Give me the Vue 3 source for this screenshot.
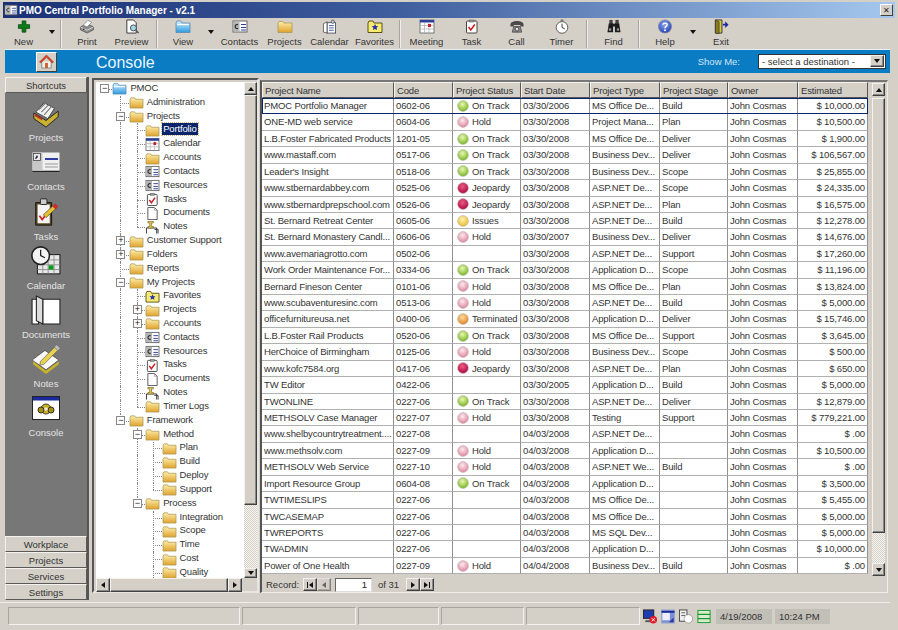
<script setup>
// tree data, flattened below so each row knows its guide lines
const treeData = {
  label: 'PMOC', icon: 'folderblue', open: true, kids: [
    { label: 'Administration' },
    { label: 'Projects', open: true, kids: [
      { label: 'Portfolio', selected: true },
      { label: 'Calendar', icon: 'calendar' },
      { label: 'Accounts' },
      { label: 'Contacts', icon: 'card' },
      { label: 'Resources', icon: 'card' },
      { label: 'Tasks', icon: 'task' },
      { label: 'Documents', icon: 'doc' },
      { label: 'Notes', icon: 'pin' },
    ] },
    { label: 'Customer Support', closed: true },
    { label: 'Folders', closed: true },
    { label: 'Reports' },
    { label: 'My Projects', open: true, kids: [
      { label: 'Favorites', icon: 'fav' },
      { label: 'Projects', closed: true },
      { label: 'Accounts', closed: true },
      { label: 'Contacts', icon: 'card' },
      { label: 'Resources', icon: 'card' },
      { label: 'Tasks', icon: 'task' },
      { label: 'Documents', icon: 'doc' },
      { label: 'Notes', icon: 'pin' },
      { label: 'Timer Logs' },
    ] },
    { label: 'Framework', open: true, kids: [
      { label: 'Method', open: true, kids: [
        { label: 'Plan' }, { label: 'Build' }, { label: 'Deploy' }, { label: 'Support' },
      ] },
      { label: 'Process', open: true, kids: [
        { label: 'Integration' }, { label: 'Scope' }, { label: 'Time' }, { label: 'Cost' },
        { label: 'Quality', more: true },
      ] },
    ] },
  ],
}

const treeRows = []
const walk = (node, guides, last, isRoot) => {
  treeRows.push({ ...node, guides, last, isRoot })
  const kids = node.kids || []
  kids.forEach((k, i) => {
    walk(k, [...guides, !last], i === kids.length - 1 && !k.more, false)
  })
}
walk(treeData, [], true, true)

const tools = [
  { label: 'New', icon: 'tNew', w: 45 }, { arrow: true }, { sep: true },
  { label: 'Print', icon: 'tPrint', w: 44 }, { label: 'Preview', icon: 'tPreview', w: 45 }, { sep: true },
  { label: 'View', icon: 'folderblue', w: 44 }, { arrow: true },
  { label: 'Contacts', icon: 'card', w: 45 }, { label: 'Projects', icon: 'folder', w: 45 },
  { label: 'Calendar', icon: 'tCal', w: 45 }, { label: 'Favorites', icon: 'fav', w: 45 }, { sep: true },
  { label: 'Meeting', icon: 'calendar', w: 45 }, { label: 'Task', icon: 'task', w: 45 },
  { label: 'Call', icon: 'tCall', w: 45 }, { label: 'Timer', icon: 'tTimer', w: 45 }, { sep: true },
  { label: 'Find', icon: 'tFind', w: 45 }, { sep: true },
  { label: 'Help', icon: 'tHelp', w: 44 }, { arrow: true },
  { label: 'Exit', icon: 'tExit', w: 44 },
]

const shortcuts = [
  { label: 'Projects', icon: 'sProjects' },
  { label: 'Contacts', icon: 'sContacts' },
  { label: 'Tasks', icon: 'sTasks' },
  { label: 'Calendar', icon: 'sCalendar' },
  { label: 'Documents', icon: 'sDocs' },
  { label: 'Notes', icon: 'sNotes' },
  { label: 'Console', icon: 'sConsole' },
]

const columns = ['Project Name', 'Code', 'Project Status', 'Start Date', 'Project Type', 'Project Stage', 'Owner', 'Estimated']

const raw = `PMOC Portfolio Manager|0602-06|On Track|03/30/2006|MS Office De...|Build|$ 10,000.00
ONE-MD web service|0604-06|Hold|03/30/2008|Project Mana...|Plan|$ 10,500.00
L.B.Foster Fabricated Products|1201-05|On Track|03/30/2008|MS Office De...|Deliver|$ 1,900.00
www.mastaff.com|0517-06|On Track|03/30/2008|Business Dev...|Deliver|$ 106,567.00
Leader's Insight|0518-06|On Track|03/30/2008|Business Dev...|Scope|$ 25,855.00
www.stbernardabbey.com|0525-06|Jeopardy|03/30/2008|ASP.NET De...|Scope|$ 24,335.00
www.stbernardprepschool.com|0526-06|Jeopardy|03/30/2008|ASP.NET De...|Plan|$ 16,575.00
St. Bernard Retreat Center|0605-06|Issues|03/30/2008|ASP.NET De...|Build|$ 12,278.00
St. Bernard Monastery Candl...|0606-06|Hold|03/30/2007|Business Dev...|Deliver|$ 14,676.00
www.avemariagrotto.com|0502-06||03/30/2008|ASP.NET De...|Support|$ 17,260.00
Work Order Maintenance For...|0334-06|On Track|03/30/2008|Application D...|Scope|$ 11,196.00
Bernard Fineson Center|0101-06|Hold|03/30/2008|MS Office De...|Plan|$ 13,824.00
www.scubaventuresinc.com|0513-06|Hold|03/30/2008|ASP.NET De...|Build|$ 5,000.00
officefurnitureusa.net|0400-06|Terminated|03/30/2008|Application D...|Deliver|$ 15,746.00
L.B.Foster Rail Products|0520-06|On Track|03/30/2008|MS Office De...|Support|$ 3,645.00
HerChoice of Birmingham|0125-06|Hold|03/30/2008|Business Dev...|Scope|$ 500.00
www.kofc7584.org|0417-06|Jeopardy|03/30/2008|ASP.NET De...|Plan|$ 650.00
TW Editor|0422-06||03/30/2005|Application D...|Build|$ 5,000.00
TWONLINE|0227-06|On Track|03/30/2008|ASP.NET De...|Deliver|$ 12,879.00
METHSOLV Case Manager|0227-07|Hold|03/30/2008|Testing|Support|$ 779,221.00
www.shelbycountrytreatment....|0227-08||04/03/2008|ASP.NET De...||$ .00
www.methsolv.com|0227-09|Hold|04/03/2008|Application D...||$ 10,500.00
METHSOLV Web Service|0227-10|Hold|04/03/2008|ASP.NET We...|Build|$ .00
Import Resource Group|0604-08|On Track|04/03/2008|Application D...||$ 3,500.00
TWTIMESLIPS|0227-06||04/03/2008|MS Office De...||$ 5,455.00
TWCASEMAP|0227-06||04/03/2008|MS Office De...||$ 5,000.00
TWREPORTS|0227-06||04/03/2008|MS SQL Dev...||$ 5,000.00
TWADMIN|0227-06||04/03/2008|Application D...||$ 10,000.00
Power of One Health|0227-09|Hold|04/04/2008|Business Dev...|Build|$ .00`

const projects = raw.split('\n').map((l) => {
  const [name, code, status, start, type, stage, est] = l.split('|')
  return { name, code, status, start, type, stage, owner: 'John Cosmas', est }
})

const ballFor = { 'On Track': 'gGreen', Hold: 'gPink', Jeopardy: 'gRed', Issues: 'gYellow', Terminated: 'gOrange' }
</script>

<template>
  <div class="app">
    <svg class="defs" aria-hidden="true">
      <defs>
        <linearGradient id="gFolder" x1="0" y1="0" x2="0" y2="1"><stop offset="0" stop-color="#fdeeaa" /><stop offset="1" stop-color="#e0a22c" /></linearGradient>
        <linearGradient id="gBlue" x1="0" y1="0" x2="0" y2="1"><stop offset="0" stop-color="#d4f0ff" /><stop offset="1" stop-color="#2e9ae0" /></linearGradient>
        <radialGradient id="gGreen" cx=".45" cy=".35" r=".7"><stop offset="0" stop-color="#eaf7b0" /><stop offset="1" stop-color="#6cb014" /></radialGradient>
        <radialGradient id="gPink" cx=".45" cy=".35" r=".7"><stop offset="0" stop-color="#fdeaee" /><stop offset="1" stop-color="#dc7c96" /></radialGradient>
        <radialGradient id="gRed" cx=".45" cy=".35" r=".7"><stop offset="0" stop-color="#ee5a80" /><stop offset="1" stop-color="#a80040" /></radialGradient>
        <radialGradient id="gYellow" cx=".45" cy=".35" r=".7"><stop offset="0" stop-color="#fff4b0" /><stop offset="1" stop-color="#e8b422" /></radialGradient>
        <radialGradient id="gOrange" cx=".45" cy=".35" r=".7"><stop offset="0" stop-color="#ffdca0" /><stop offset="1" stop-color="#e07c18" /></radialGradient>
        <radialGradient id="gHelp" cx=".45" cy=".35" r=".7"><stop offset="0" stop-color="#8aa8f0" /><stop offset="1" stop-color="#1c3cb0" /></radialGradient>
      </defs>

      <symbol id="folder" viewBox="0 0 16 14"><path d="M1 3.5 2 2h4l1 1.5h8V13H1z" fill="url(#gFolder)" stroke="#a89858" stroke-width=".8" /></symbol>
      <symbol id="folderblue" viewBox="0 0 16 14"><path d="M1 3.5 2 1.5h4l1 2h8V13H1z" fill="url(#gBlue)" stroke="#5a8ab0" stroke-width=".8" /><path d="M2 5h12" stroke="#fff" stroke-width="1.2" /></symbol>
      <symbol id="calendar" viewBox="0 0 16 14"><rect x="1" y=".5" width="14" height="13" fill="#fff" stroke="#777" /><rect x="1" y=".5" width="14" height="2.5" fill="#2a3f9a" /><path d="M1 6h14M1 9.5h14M5.5 3v10M10 3v10" stroke="#aaa" stroke-width=".7" /><rect x="9" y="4.5" width="3" height="3" fill="#c02030" /></symbol>
      <symbol id="card" viewBox="0 0 16 14"><rect x="1" y="1.5" width="14" height="11" fill="#fff" stroke="#666" /><rect x="1.5" y="2" width="6" height="10" fill="#b4b4b4" /><path d="M6 5.2A2 2 0 1 0 6 8.8" fill="none" stroke="#222" stroke-width="1.1" /><path d="M9 5h5M9 8h5M9 10.5h5" stroke="#2a3f9a" /></symbol>
      <symbol id="task" viewBox="0 0 16 14"><rect x="2.5" y="1.5" width="10.5" height="12" rx="1" fill="#fff" stroke="#444" /><rect x="5.5" y=".5" width="4.5" height="2" fill="#999" stroke="#555" stroke-width=".5" /><path d="m4.6 7.5 2.2 3 4-5.5" fill="none" stroke="#d01820" stroke-width="1.5" /></symbol>
      <symbol id="doc" viewBox="0 0 16 14"><path d="M3 .5h7l3 3v10H3z" fill="#fff" stroke="#555" /><path d="M10 .5v3h3" fill="none" stroke="#888" stroke-width=".7" /></symbol>
      <symbol id="pin" viewBox="0 0 16 14"><path d="M1.5 13.5v-6h11v6" fill="#fff" stroke="#333" /><path d="M3 .5h6V2H7v4h2v1.500H3V6h2V2H3z" fill="#f0d050" stroke="#706020" stroke-width=".7" /><path d="M10 9h4v4.500" fill="none" stroke="#333" /></symbol>
      <symbol id="fav" viewBox="0 0 16 14"><path d="M1 3.500 2 1.500h4l1 2h8V13H1z" fill="#f6ec70" stroke="#5a5018" /><path d="m8 4.600 1 2 2.200.2-1.600 1.500.4 2.200-2-1-2 1 .4-2.200-1.600-1.500L7 6.600z" fill="#2a2fb0" /></symbol>

      <symbol id="tNew" viewBox="0 0 16 16"><path d="M6 2h4v4h4v4h-4v4H6v-4H2V6h4z" fill="#0c7a18" stroke="#08480e" stroke-width=".8" /></symbol>
      <symbol id="tPrint" viewBox="0 0 16 16"><path d="M1 8.500 8 5l7 3.500v3l-7 3.500-7-3.500z" fill="#8c8c8c" stroke="#444" stroke-width=".7" /><path d="M4 6.500 9 1.500l4 2-5 5z" fill="#fff" stroke="#666" stroke-width=".6" /><path d="m1 8.500 7 3.500 7-3.500" fill="none" stroke="#d8d8d8" /><circle cx="4.500" cy="11" r=".8" fill="#222" /></symbol>
      <symbol id="tPreview" viewBox="0 0 16 16"><path d="M2.500 1h7l3 3v11h-10z" fill="#fff" stroke="#333" /><circle cx="9.500" cy="9.500" r="3.200" fill="#a8d8e8" stroke="#445" /><path d="m12 12 3 3" stroke="#555" stroke-width="1.600" /></symbol>
      <symbol id="tCal" viewBox="0 0 16 16"><path d="M1 5 5 3v12l-4-1z" fill="#fff" stroke="#444" stroke-width=".8" /><rect x="5" y="4" width="9" height="11" fill="#fff" stroke="#334" stroke-width=".8" /><path d="M7 7h5M7 9.500h5M7 12h5" stroke="#2a3f9a" stroke-width=".9" /><circle cx="11" cy="2.800" r="1.700" fill="#ccd" stroke="#334" stroke-width=".7" /></symbol>
      <symbol id="tCall" viewBox="0 0 16 16"><path d="M1 6c0-5 14-5 14 0v2h-3.500V6.500h-7V8H1z" fill="#4a4a4a" /><path d="M3 14 4.500 8h7L13 14z" fill="#8a8a8a" stroke="#333" stroke-width=".7" /><circle cx="8" cy="10.700" r="2" fill="#e0e0e0" stroke="#222" stroke-width=".7" /></symbol>
      <symbol id="tTimer" viewBox="0 0 16 16"><circle cx="8" cy="9" r="6.200" fill="#fff" stroke="#555" /><rect x="6.500" y=".5" width="3" height="2" fill="#777" /><path d="M8 9V5M8 9l3 1.500" stroke="#333" fill="none" /></symbol>
      <symbol id="tFind" viewBox="0 0 16 16"><rect x="3" y="1" width="3.500" height="4" fill="#444" /><rect x="9.500" y="1" width="3.500" height="4" fill="#444" /><rect x="6" y="5" width="4" height="3" fill="#222" /><path d="M2.500 4.500h4.500V14H1z" fill="#1c1c1c" /><path d="M9 4.500h4.500L15 14H9z" fill="#1c1c1c" /><rect x="2.500" y="10" width="2.500" height="2.500" fill="#999" /><rect x="11" y="10" width="2.500" height="2.500" fill="#999" /></symbol>
      <symbol id="tHelp" viewBox="0 0 16 16"><circle cx="8" cy="8" r="7" fill="url(#gHelp)" stroke="#889" stroke-width=".8" /><path d="M5.800 6.200C6 3.800 10.500 3.900 10.300 6.300 10.200 8 8 7.800 8 9.800" fill="none" stroke="#fff" stroke-width="1.500" /><circle cx="8" cy="12" r="1" fill="#fff" /></symbol>
      <symbol id="tExit" viewBox="0 0 16 16"><path d="M2 1h7v14H2z" fill="#d8c840" stroke="#333" /><path d="M2 1l4 2v13l-4-1z" fill="#8a7a18" stroke="#333" stroke-width=".7" /><path d="M10 5h2.500V2.500L16 6l-3.500 3.500V7H10z" fill="#1c2ca0" /></symbol>

      <symbol id="sProjects" viewBox="0 0 32 32"><path d="M3 16 16 24l13-10v6L16 31 3 22z" fill="#c8b030" stroke="#222" /><path d="M5 15 14 5l11 6-7 11z" fill="#f2f2f2" stroke="#444" /><path d="m8 13 9-9M11 15l9-9M14 18l8-9" stroke="#777" stroke-width="1.200" /><path d="M4 18l8 5" stroke="#c03020" stroke-width="2" /></symbol>
      <symbol id="sContacts" viewBox="0 0 28 20"><rect x=".5" y=".5" width="27" height="18" fill="#f0f0f0" /><rect x=".5" y=".5" width="10" height="18" fill="#c8c8c8" /><rect x="1.500" y="1.500" width="7" height="7" fill="#e8e8e8" stroke="#333" stroke-width=".7" /><path d="M3 6.500 5 3l1 2-2 2" fill="#222" /><path d="M13 7h13" stroke="#1a2a9a" stroke-width="1.800" /><path d="M13 12h13M13 15h13" stroke="#999" /><path d="M.5 19.500h27" stroke="#222" /></symbol>
      <symbol id="sTasks" viewBox="0 0 28 32"><path d="M3 6h17v24H3z" fill="#5a4a20" stroke="#111" /><rect x="5" y="8" width="13" height="20" fill="#f4f4f4" /><rect x="8" y="2" width="7" height="6" rx="1" fill="#ccc" stroke="#222" /><path d="m7 20 3 4 7-9" fill="none" stroke="#d02020" stroke-width="1.800" /><path d="m11 19 12-11 3 3-12 11z" fill="#e8c030" stroke="#333" stroke-width=".6" /><path d="m21 10 3-3 3 3-3 3z" fill="#d02828" /></symbol>
      <symbol id="sCalendar" viewBox="0 0 28 28"><rect x="6" y="8" width="21" height="18" fill="#e8e8e8" stroke="#222" /><path d="M6 13h21M6 17.500h21M6 22h21M11 8v18M16 8v18M21.500 8v18" stroke="#888" stroke-width=".8" /><rect x="16.500" y="18" width="4.500" height="4" fill="#0a9a20" /><circle cx="9" cy="9" r="8.200" fill="#f4f4f4" stroke="#222" stroke-width="1.500" /><path d="M9 3.500V9l4 2" fill="none" stroke="#222" stroke-width="1.200" /></symbol>
      <symbol id="sDocs" viewBox="0 0 28 28"><path d="M11 4h16v23H11z" fill="#fff" stroke="#222" /><path d="M1 4h6v23H1z" fill="#fff" stroke="#222" /><path d="M5 1 11 4v23L5 24z" fill="#ddd" stroke="#222" /></symbol>
      <symbol id="sNotes" viewBox="0 0 28 28"><path d="M1 15 13 6l13 9-12 9z" fill="#fafafa" stroke="#333" stroke-width=".6" /><path d="M2 16l12 9 12-9v3L14 28 2 19z" fill="#c8b428" /><path d="M9 16 22 3l3 3-13 13-4 1z" fill="#e8d050" stroke="#555" stroke-width=".6" /><path d="m22 3 2-2 3 3-2 2z" fill="#bbb" /></symbol>
      <symbol id="sConsole" viewBox="0 0 28 24"><rect x=".5" y=".5" width="27" height="23" fill="#fff" stroke="#222" /><rect x="1" y="1" width="26" height="3.500" fill="#1a2a9a" /><circle cx="14" cy="13" r="5" fill="#c8b020" stroke="#443" /><circle cx="9" cy="14" r="3" fill="#a89010" stroke="#332" /><circle cx="19" cy="14" r="3" fill="#a89010" stroke="#332" /><circle cx="14" cy="13" r="1.800" fill="#e8e8f8" /></symbol>
      <symbol id="home" viewBox="0 0 16 16"><path d="M3 8v7h10V8" fill="#f5f0e8" stroke="#888" /><path d="M.5 8.500 8 1l7.500 7.500-1.500 1L8 3.500 2 9.500z" fill="#d84828" stroke="#902010" stroke-width=".5" /><rect x="6.500" y="9.500" width="3" height="5.500" fill="#c86030" /></symbol>

      <symbol id="stNet" viewBox="0 0 16 16"><rect x="1" y="1" width="11" height="9" fill="#1c3cb0" stroke="#222" /><path d="M3 12h8v2H3z" fill="#555" /><circle cx="11.500" cy="11.500" r="4" fill="#e01828" /><path d="m9.800 9.800 3.400 3.400m0-3.400-3.400 3.400" stroke="#fff" /></symbol>
      <symbol id="stWin" viewBox="0 0 16 16"><rect x="1" y="1" width="14" height="14" fill="#7a90d8" stroke="#a0a8c8" /><rect x="2" y="4" width="8" height="8" fill="#eef" /><path d="M1 3h14" stroke="#1a2a9a" stroke-width="2" /><path d="m9 14 5-5v5z" fill="#2a3a9a" /></symbol>
      <symbol id="stDoc" viewBox="0 0 16 16"><rect x="1" y="1" width="8" height="12" fill="#f0f0f0" stroke="#444" /><path d="M3 4h4M3 7h4" stroke="#555" /><circle cx="10.500" cy="10.500" r="4.500" fill="#fff" stroke="#666" stroke-width=".5" /></symbol>
      <symbol id="stList" viewBox="0 0 16 16"><rect x="1.500" y="1.500" width="13" height="13" fill="#dcebd0" stroke="#129a2a" /><path d="M1.500 5.800h13M1.500 10.200h13" stroke="#129a2a" stroke-width="1.400" /></symbol>
    </svg>

    <header class="titlebar">
      <svg class="app-icon" viewBox="0 0 16 14"><use href="#card" /></svg>
      <span class="title-text">PMO Central Portfolio Manager - v2.1</span>
      <button class="close-btn">✕</button>
    </header>

    <nav class="toolbar">
      <template v-for="(t, i) in tools" :key="i">
        <span v-if="t.sep" class="tool-sep"></span>
        <span v-else-if="t.arrow" class="tool-arrow"><i class="arrow-down"></i></span>
        <div v-else class="tool" :style="{ width: t.w + 'px' }">
          <svg class="tool-icon"><use :href="'#' + t.icon" /></svg>
          <span>{{ t.label }}</span>
        </div>
      </template>
    </nav>

    <section class="band">
      <button class="home-btn"><svg><use href="#home" /></svg></button>
      <h1 class="band-title">Console</h1>
      <span class="show-me">Show Me:</span>
      <div class="dest-select">
        <span>- select a destination -</span>
        <span class="sb-btn dest-drop"><i class="arrow-down"></i></span>
      </div>
    </section>

    <main class="main">
      <aside class="sidebar">
        <button class="side-btn first">Shortcuts</button>
        <div class="shortcuts">
          <div v-for="s in shortcuts" :key="s.label" class="shortcut">
            <div class="shortcut-icon"><svg :class="s.icon"><use :href="'#' + s.icon" /></svg></div>
            <span>{{ s.label }}</span>
          </div>
        </div>
        <button class="side-btn">Workplace</button>
        <button class="side-btn">Projects</button>
        <button class="side-btn">Services</button>
        <button class="side-btn">Settings</button>
      </aside>

      <section class="tree-pane">
        <div class="tree-top">
          <div class="tree">
            <div v-for="(r, i) in treeRows" :key="i" class="tree-row">
              <span v-for="(g, gi) in r.guides" :key="gi" class="guide" :class="{ line: g }"></span>
              <span class="guide elbow" :class="{ root: r.isRoot, last: r.last }">
                <span v-if="r.open || r.closed" class="expander">{{ r.open ? '−' : '+' }}</span>
              </span>
              <svg class="tree-icon"><use :href="'#' + (r.icon || 'folder')" /></svg>
              <span class="tree-label" :class="{ selected: r.selected }">{{ r.label }}</span>
            </div>
          </div>
          <div class="vscroll tree-vscroll">
            <span class="sb-btn"><i class="arrow-up"></i></span>
            <span class="sb-thumb"></span>
            <span class="sb-track"></span>
            <span class="sb-btn short"><i class="arrow-down"></i></span>
          </div>
        </div>
        <div class="hscroll">
          <span class="sb-btn"><i class="arrow-left"></i></span>
          <span class="sb-thumb"></span>
          <span class="sb-btn"><i class="arrow-right"></i></span>
          <span class="sb-corner"></span>
        </div>
      </section>

      <section class="grid-pane">
        <div class="grid-top">
          <div class="grid">
            <div class="grid-head">
              <div v-for="c in columns" :key="c" class="head-cell">{{ c }}</div>
            </div>
            <div v-for="(p, i) in projects" :key="i" class="grid-row" :class="{ current: i === 0 }">
              <div class="cell">{{ p.name }}</div>
              <div class="cell">{{ p.code }}</div>
              <div class="cell status">
                <template v-if="p.status">
                  <svg class="ball" viewBox="0 0 12 12"><circle cx="6" cy="6" r="5.400" :fill="`url(#${ballFor[p.status]})`" stroke="#b8b8b8" stroke-width=".6" /></svg>
                  <span>{{ p.status }}</span>
                </template>
              </div>
              <div class="cell">{{ p.start }}</div>
              <div class="cell">{{ p.type }}</div>
              <div class="cell">{{ p.stage }}</div>
              <div class="cell">{{ p.owner }}</div>
              <div class="cell num">{{ p.est }}</div>
            </div>
          </div>
          <div class="vscroll grid-vscroll">
            <span class="sb-btn"><i class="arrow-up"></i></span>
            <span class="sb-thumb"></span>
            <span class="sb-track"></span>
            <span class="sb-btn"><i class="arrow-down"></i></span>
          </div>
        </div>
        <div class="record-bar">
          <span class="rec-label">Record:</span>
          <span class="sb-btn nav"><i class="bar"></i><i class="arrow-left"></i></span>
          <span class="sb-btn nav dim"><i class="arrow-left"></i></span>
          <input class="rec-input" value="1" readonly />
          <span class="rec-of">of 31</span>
          <span class="sb-btn nav"><i class="arrow-right"></i></span>
          <span class="sb-btn nav"><i class="arrow-right"></i><i class="bar"></i></span>
        </div>
      </section>
    </main>

    <div class="rule"></div>

    <footer class="statusbar">
      <span class="st-cell c1"></span>
      <span class="st-cell c2"></span>
      <span class="st-cell c3"></span>
      <span class="st-cell c4"></span>
      <span class="st-cell c5"></span>
      <svg class="st-icon"><use href="#stNet" /></svg>
      <svg class="st-icon"><use href="#stWin" /></svg>
      <svg class="st-icon"><use href="#stDoc" /></svg>
      <svg class="st-icon"><use href="#stList" /></svg>
      <span class="st-info date">4/19/2008</span>
      <span class="st-info time">10:24 PM</span>
    </footer>
  </div>
</template>

<style>
html, body { margin: 0; background: #d4d0c8; }
</style>

<style scoped>
.app {
  width: 898px;
  height: 630px;
  box-sizing: border-box;
  padding-top: 2px;
  overflow: hidden;
  background: #d4d0c8;
  font-family: "Liberation Sans", Arial, sans-serif;
  font-size: 9.5px;
  color: #222;
  display: flex;
  flex-direction: column;
}
.defs { width: 0; height: 0; display: block; }
button { font-family: inherit; padding: 0; }

/* title */
.titlebar {
  height: 16px;
  margin: 0 3px;
  flex: none;
  display: flex;
  align-items: center;
  background: linear-gradient(90deg, #1a3076, #3f5f9f 45%, #a4c8ee);
  color: #fff;
  font-weight: 700;
  font-size: 10px;
}
.app-icon { width: 14px; height: 12px; margin: 0 1px 0 1px; }
.close-btn {
  margin-left: auto;
  margin-right: 2px;
  width: 13px;
  height: 12px;
  font-size: 8px;
  line-height: 9px;
  color: #222;
  background: #d4d0c8;
  border: 1px solid;
  border-color: #fff #404040 #404040 #fff;
}

/* toolbar */
.toolbar {
  height: 31px;
  flex: none;
  padding-left: 1px;
  display: flex;
  align-items: stretch;
}
.tool {
  flex: none;
  display: flex;
  flex-direction: column;
  align-items: center;
  justify-content: flex-end;
  padding-bottom: 1px;
  line-height: 12px;
  color: #333;
  white-space: nowrap;
}
.tool-icon { width: 16px; height: 15px; margin-bottom: 2px; }
.tool-arrow {
  width: 12px;
  flex: none;
  display: flex;
  align-items: center;
  justify-content: center;
  padding-bottom: 4px;
}
.tool-sep {
  width: 0;
  margin: 2px 3px 1px 2px;
  flex: none;
  border-left: 1px solid #a8a59c;
  border-right: 1px solid #f0eee8;
}
.arrow-down, .arrow-up, .arrow-left, .arrow-right { display: block; width: 0; height: 0; border: 3px solid transparent; }
.arrow-down { border-top: 4px solid #111; border-bottom: 0; }
.arrow-up { border-bottom: 4px solid #111; border-top: 0; }
.arrow-left { border-right: 4px solid #111; border-left: 0; }
.arrow-right { border-left: 4px solid #111; border-right: 0; }

/* blue band */
.band {
  height: 24px;
  flex: none;
  margin: 0 8px 0 5px;
  display: flex;
  align-items: center;
  background: #0a7cc4;
  border-top: 1px solid #e8f0f4;
  box-sizing: border-box;
  color: #fff;
}
.home-btn {
  width: 21px;
  height: 20px;
  margin-left: 31px;
  background: #d4d0c8;
  border: 1px solid;
  border-color: #fff #404040 #404040 #fff;
  display: flex;
  align-items: center;
  justify-content: center;
}
.home-btn svg { width: 15px; height: 15px; }
.band-title { margin: 2px 0 0 39px; font-size: 16px; font-weight: 400; color: #e8f6ff; }
.show-me { margin-left: auto; color: #cfe6f4; }
.dest-select {
  width: 128px;
  height: 15px;
  margin: 0 4px 1px 18px;
  box-sizing: border-box;
  display: flex;
  align-items: center;
  justify-content: space-between;
  padding-left: 3px;
  background: #fff;
  border: 1px solid #333;
  color: #333;
}
.dest-drop { width: 14px; height: 12px; margin-right: 1px; }

/* main */
.main {
  height: 527px;
  flex: none;
  padding: 2px 0 0 5px;
  box-sizing: border-box;
  display: flex;
  align-items: flex-start;
}

/* sidebar */
.sidebar {
  width: 84px;
  height: 523px;
  margin-top: 2px;
  flex: none;
  box-sizing: border-box;
  border-right: 2px solid #555;
  display: flex;
  flex-direction: column;
}
.side-btn {
  height: 16px;
  flex: none;
  box-sizing: border-box;
  background: #d4d0c8;
  border: 1px solid;
  border-color: #f4f2ee #5a5a5a #5a5a5a #f4f2ee;
  font-size: 9.5px;
  color: #333;
}
.shortcuts {
  flex: 1;
  min-height: 0;
  background: #777;
  padding-top: 2px;
  display: flex;
  flex-direction: column;
}
.shortcut {
  height: 49.2px;
  flex: none;
  display: flex;
  flex-direction: column;
  align-items: center;
  justify-content: flex-end;
  color: #e4e4e4;
  line-height: 13px;
}
.shortcut-icon { height: 32px; display: flex; align-items: center; justify-content: center; margin-bottom: 2px; }
.shortcut-icon svg { width: 30px; height: 30px; }
.shortcut-icon .sContacts { width: 28px; height: 20px; }
.shortcut-icon .sConsole { width: 28px; height: 24px; }

/* tree */
.tree-pane {
  width: 167px;
  height: 515px;
  flex: none;
  margin: 3px 0 0 3px;
  box-sizing: border-box;
  padding: 2px 0 0 2px;
  border: 2px solid;
  border-color: #555 #e8e6e0 #e8e6e0 #555;
  display: flex;
  flex-direction: column;
}
.tree-top { height: 496px; flex: none; display: flex; }
.tree {
  width: 148px;
  flex: none;
  overflow: hidden;
  background: #fff;
  letter-spacing: -.15px;
  color: #333;
}
.tree-row {
  height: 13.83px;
  display: flex;
  align-items: center;
  white-space: nowrap;
}
.guide {
  width: 16.4px;
  height: 100%;
  flex: none;
  position: relative;
}
.guide.line::before, .elbow::before {
  content: '';
  position: absolute;
  left: 8px;
  top: 0;
  bottom: 0;
  border-left: 1px dotted #888;
}
.elbow::after {
  content: '';
  position: absolute;
  left: 8px;
  right: 0;
  top: 50%;
  border-top: 1px dotted #888;
}
.elbow.last::before { bottom: 50%; }
.elbow.root::before { display: none; }
.expander {
  position: absolute;
  z-index: 1;
  left: 4px;
  top: 2px;
  width: 9px;
  height: 9px;
  box-sizing: border-box;
  border: 1px solid #888;
  background: #fff;
  font-size: 9px;
  line-height: 7px;
  text-align: center;
  color: #111;
}
.tree-icon { width: 15px; height: 13px; flex: none; margin-right: 2px; }
.tree-label { padding: 0 1px; line-height: 12px; margin-bottom: 2px; }
.tree-label.selected { background: #0a246a; color: #fff; outline: 1px dotted #c8b888; }

/* scrollbars */
.sb-btn {
  box-sizing: border-box;
  flex: none;
  display: flex;
  align-items: center;
  justify-content: center;
  background: #d4d0c8;
  border: 1px solid;
  border-color: #f4f2ee #404040 #404040 #f4f2ee;
  box-shadow: inset -1px -1px #888;
}
.vscroll { display: flex; flex-direction: column; flex: none; }
.vscroll .sb-btn { height: 13px; }
.vscroll .sb-btn.short { height: 10px; }
.sb-thumb {
  flex: none;
  box-sizing: border-box;
  background: #d4d0c8;
  border: 1px solid;
  border-color: #f4f2ee #404040 #404040 #f4f2ee;
  box-shadow: inset -1px -1px #888;
}
.sb-track {
  flex: 1;
  background-color: #ecebe6;
  background-image: repeating-conic-gradient(#d4d0c8 0 25%, #f6f5f1 0 50%);
  background-size: 2px 2px;
}
.tree-vscroll { width: 13px; height: 496px; }
.tree-vscroll .sb-thumb { height: 410px; }
.hscroll { height: 14px; flex: none; display: flex; }
.hscroll .sb-btn { width: 14px; }
.hscroll .sb-thumb { width: 118px; }
.sb-corner { flex: 1; }

/* project grid */
.grid-pane {
  width: 628px;
  height: 513px;
  flex: none;
  margin: 5px 0 0 1px;
  box-sizing: border-box;
  border-left: 2px solid #555;
  border-top: 2px solid #777;
  border-right: 1px solid #efeee9;
  border-bottom: 1px solid #efeee9;
  display: flex;
  flex-direction: column;
}
.grid-top { height: 495px; flex: none; display: flex; }
.grid { width: 606px; flex: none; letter-spacing: -.15px; color: #333; }
.grid-head, .grid-row {
  display: grid;
  grid-template-columns: 132px 59px 68px 69px 70px 68px 70px 70px;
}
.grid-head { height: 16px; }
.head-cell {
  box-sizing: border-box;
  padding-left: 2px;
  background: #d4d0c8;
  border: 1px solid;
  border-color: #f4f2ee #555 #555 #f4f2ee;
  line-height: 15px;
  white-space: nowrap;
  overflow: hidden;
}
.grid-row { height: 16.43px; background: #fff; }
.grid-row.current { outline: 1px solid #0a246a; outline-offset: -1px; }
.cell {
  box-sizing: border-box;
  padding: 0 2px;
  line-height: 15.4px;
  border-right: 1px solid #909090;
  border-bottom: 1px solid #b0b0b0;
  white-space: nowrap;
  overflow: hidden;
}
.cell.status { display: flex; align-items: center; }
.ball { width: 12px; height: 12px; flex: none; margin: 0 3px 0 2px; }
.cell.num { text-align: right; }
.grid-vscroll { width: 13px; height: 493px; margin-left: 4px; margin-top: 1px; }
.grid-vscroll .sb-thumb { height: 435px; margin-top: 2px; }

.record-bar {
  height: 15px;
  flex: none;
  padding-left: 4px;
  display: flex;
  align-items: center;
  color: #333;
}
.rec-label { width: 37px; flex: none; }
.sb-btn.nav { width: 14px; height: 13px; gap: 1px; }
.sb-btn.nav.dim { opacity: .55; }
.bar { display: block; width: 1px; height: 6px; background: #111; }
.rec-input {
  width: 37px;
  height: 14px;
  margin: 0 6px 0 4px;
  padding: 0 4px 0 0;
  box-sizing: border-box;
  text-align: right;
  font: inherit;
  color: #222;
  background: #fff;
  border: 1px solid;
  border-color: #666 #ddd #ddd #666;
  outline: none;
}
.rec-of { width: 28px; flex: none; }

.rule {
  height: 0;
  flex: none;
  margin: 2px 8px 0 0;
  border-top: 1px solid #efeee9;
}

/* status bar */
.statusbar {
  height: 18px;
  margin-top: 4px;
  padding-left: 8px;
  flex: none;
  display: flex;
  align-items: stretch;
  gap: 2px;
}
.st-cell {
  box-sizing: border-box;
  flex: none;
  border: 1px solid;
  border-color: #a8a59c #f4f2ee #f4f2ee #a8a59c;
}
.c1 { width: 232px; }
.c2 { width: 114px; }
.c3 { width: 81px; }
.c4 { width: 83px; }
.c5 { width: 114px; }
.st-icon { width: 16px; height: 15px; flex: none; align-self: center; }
.st-info {
  height: 15px;
  align-self: center;
  flex: none;
  box-sizing: border-box;
  padding-left: 4px;
  background: #c2bfb7;
  line-height: 15px;
  color: #333;
}
.date { width: 56px; margin-left: 2px; }
.time { width: 55px; margin-left: 1px; }
</style>
